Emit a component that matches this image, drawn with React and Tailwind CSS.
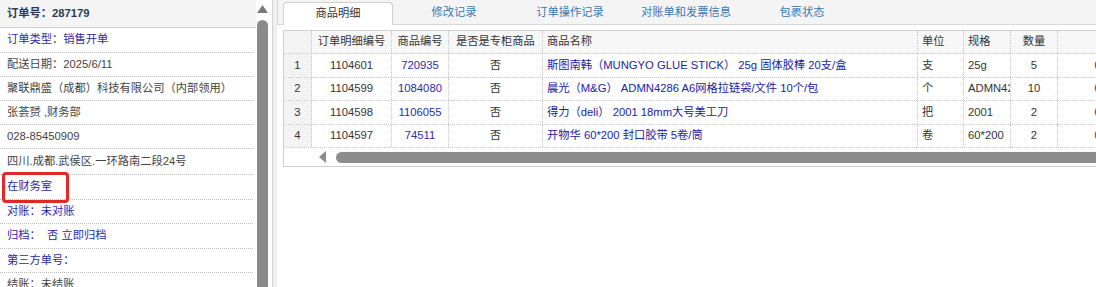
import React from "react";

const leftRows = [
  { t: "订单类型：销售开单", blue: true, h: "h-[25px]" },
  { t: "配送日期：2025/6/11", h: "h-[24px]" },
  { t: "聚联鼎盛（成都）科技有限公司（内部领用）", h: "h-[24px]" },
  { t: "张荟赟 ,财务部", h: "h-[24px]" },
  { t: "028-85450909", h: "h-[24px]" },
  { t: "四川.成都.武侯区.一环路南二段24号", h: "h-[26px]" },
  { t: "在财务室", blue: true, h: "h-[24.5px]" },
  { t: "对账：未对账", blue: true, h: "h-[24.5px]" },
  { t: "归档：  否 立即归档", blue: true, h: "h-[24.5px]" },
  { t: "第三方单号：", blue: true, h: "h-[24.5px]" },
  { t: "结账：未结账", h: "h-[24.5px]" },
];

const rows = [
  ["1", "1104601", "720935", "否", "斯图南韩（MUNGYO GLUE STICK） 25g 固体胶棒 20支/盒", "支", "25g", "5", "0.00"],
  ["2", "1104599", "1084080", "否", "晨光（M&G） ADMN4286 A6网格拉链袋/文件 10个/包", "个", "ADMN4286", "10", "0.00"],
  ["3", "1104598", "1106055", "否", "得力（deli） 2001 18mm大号美工刀", "把", "2001", "2", "0.00"],
  ["4", "1104597", "74511", "否", "开物华 60*200 封口胶带 5卷/筒", "卷", "60*200", "2", "0.00"],
];

const tabs = ["商品明细", "修改记录", "订单操作记录", "对账单和发票信息", "包裹状态"];

const cell = "border-r border-dotted border-[#c8c8c8] overflow-hidden whitespace-nowrap flex items-center";

function Row({ r, header }) {
  const base = header ? "text-[#333]" : "";
  return (
    <div className={`flex border-b border-dotted border-[#c8c8c8] ${header ? "bg-[#f7f7f7] h-[23px]" : "bg-white h-[23.5px]"}`}>
      <div className={`${cell} w-[28px] shrink-0 justify-center bg-[#f3f3f3] text-[#333]`}>{r[0]}</div>
      <div className={`${cell} w-[80px] shrink-0 justify-center text-[#333]`}>{r[1]}</div>
      <div className={`${cell} w-[57px] shrink-0 justify-center ${header ? base : "text-[#2c2ca6]"}`}>{r[2]}</div>
      <div className={`${cell} w-[94px] shrink-0 justify-center text-[#333]`}>{r[3]}</div>
      <div className={`${cell} w-[375px] shrink-0 pl-[4px] ${header ? base : "text-[#2222a0]"}`}>{r[4]}</div>
      <div className={`${cell} w-[46px] shrink-0 pl-[4px] text-[#333]`}>{r[5]}</div>
      <div className={`${cell} w-[47px] shrink-0 pl-[4px] text-[#333]`}>{r[6]}</div>
      <div className={`${cell} w-[47px] shrink-0 justify-center text-[#333]`}>{r[7]}</div>
      <div className={`${cell} w-[96px] shrink-0 justify-center text-[#333]`}>{r[8]}</div>
    </div>
  );
}

export default function App() {
  return (
    <div className="flex w-[1096px] h-[287px] overflow-hidden bg-white text-[11.25px] leading-none font-['Liberation_Sans','Noto_Sans_CJK_SC',sans-serif]">
      {/* Left panel */}
      <div className="relative flex w-[272px] shrink-0">
        <div className="w-[256px] shrink-0">
          <div className="h-[28px] bg-[#f4f4f4] border-b border-[#cfcfcf] flex items-center pl-[7px] font-bold text-[#2b3a55]">
            订单号：287179
          </div>
          {leftRows.map((r, i) => (
            <div
              key={i}
              className={`${r.h} mr-[3px] border-b border-dotted border-[#bdbdbd] flex items-center pl-[7px] whitespace-pre ${r.blue ? "text-[#2a2aa8]" : "text-[#444]"}`}
            >
              {r.t}
            </div>
          ))}
        </div>
        {/* vertical scrollbar */}
        <div className="w-[16px] shrink-0 flex flex-col items-start pl-[1px] bg-white">
          <svg width="11" height="20" viewBox="0 0 11 20" className="shrink-0">
            <polygon points="5.5,5 11,13 0,13" fill="#7a7a7a" />
          </svg>
          <div className="w-[11px] flex-1 bg-[#8a8a8a] rounded-t-[6px]" />
        </div>
        {/* annotation box */}
        <div className="absolute left-[2px] top-[172px] w-[67px] h-[31px] border-[3px] border-[#e32626] rounded-[4px]" />
      </div>

      {/* Divider strip */}
      <div className="w-[5px] shrink-0 border-l border-[#d2d2d2] bg-[#efefef]" />

      {/* Right panel */}
      <div className="flex-1 min-w-0 overflow-hidden bg-white">
        <div className="h-[25px] bg-[#f4f4f4] border-b border-l border-[#d6d6d6] flex items-end pl-[5px] gap-[6px]">
          {tabs.map((t, i) =>
            i === 0 ? (
              <div
                key={t}
                className="w-[110px] h-[23px] shrink-0 bg-white border border-b-0 border-[#cfcfcf] rounded-t-[4px] flex items-center justify-center text-[#333] mb-[-1px]"
              >
                {t}
              </div>
            ) : (
              <div key={t} className="w-[110px] h-[23px] shrink-0 flex items-center justify-center text-[#3779b4]">
                {t}
              </div>
            )
          )}
        </div>
        <div className="pl-[6px] pt-[5px]">
          <div className="w-[900px] border-l border-t border-b border-[#cfcfcf]">
            <Row header r={["", "订单明细编号", "商品编号", "是否是专柜商品", "商品名称", "单位", "规格", "数量", ""]} />
            {rows.map((r) => (
              <Row key={r[0]} r={r} />
            ))}
            <div className="h-[18px] flex items-center">
              <div className="w-[28px] shrink-0 h-full" />
              <svg width="10" height="12" viewBox="0 0 10 12" className="ml-[6px] shrink-0">
                <polygon points="1,6 8,0 8,12" fill="#8a8a8a" />
              </svg>
              <div className="ml-[8px] flex-1 h-[11px] bg-[#8c8c8c] rounded-l-[6px]" />
            </div>
          </div>
        </div>
      </div>
    </div>
  );
}
